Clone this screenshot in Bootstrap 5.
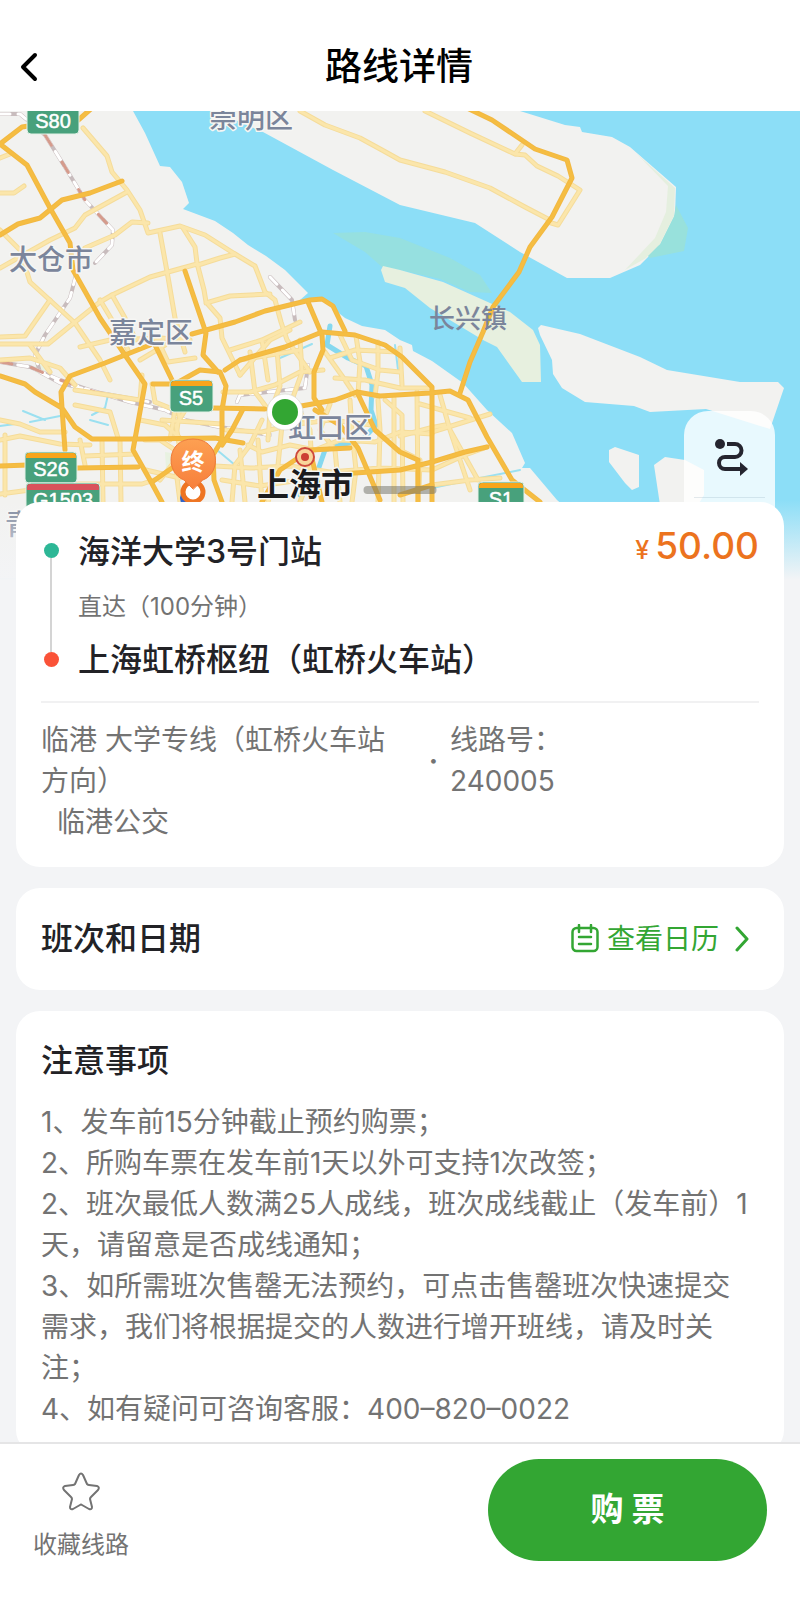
<!DOCTYPE html>
<html lang="zh-CN">
<head>
<meta charset="utf-8">
<meta name="viewport" content="width=device-width, initial-scale=1">
<title>路线详情</title>
<link href="https://cdn.jsdelivr.net/npm/bootstrap@5.3.0/dist/css/bootstrap.min.css" rel="stylesheet">
<style>
  :root { --brand: #33a633; --ink: #222226; --soft: #737373; --page: #f3f4f6; }
  body { background: var(--page); color: var(--ink); font-family: Inter, "Noto Sans CJK SC", sans-serif; padding-bottom: 162px; }
  .top-bar { height: 111px; padding: 22px 18px 0; }
  .page-title { font-size: 37px; line-height: 48px; font-weight: 500; color: #000; }
  .icon-btn { border: 0; background: none; padding: 0; line-height: 0; }
  .route-map { height: 469px; }
  .route-map > svg { width: 100%; height: 100%; display: block; }
  .map-tools { top: 300px; right: 25px; width: 91px; height: 120px; border-radius: 24px; background: rgba(255,255,255,.8); padding: 0 10px; }
  .map-tools .icon-btn { height: 87px; padding: 8px 0 0 4px; border-bottom: 1px solid rgba(120,150,170,.2); }
  .drag-handle { top: 375px; width: 73px; height: 8px; background: rgba(110,110,100,.5); }
  .sheet { margin-top: -78px; padding: 0 16px; gap: 21px; }
  .panel { background: #fff; border-radius: 24px; padding: 27px 25px 24px; }
  .panel-row { padding: 24px 25px; }
  .head-text { font-size: 32px; line-height: 46px; font-weight: 500; margin: 0; }
  .body-text { font-size: 28px; line-height: 41px; color: var(--soft); }
  .hint-text { font-size: 24px; line-height: 36px; color: var(--soft); }
  .track { width: 20px; padding: 14px 0 16px; }
  .stop { width: 15px; height: 15px; background: #2db796; }
  .stop-end { background: #fa5238; }
  .track-line { width: 2px; background: #d4d4d4; }
  .stations { margin-left: 17px; }
  .duration { margin: 0; padding: 14px 0 12px; }
  .price { color: #ec731e; font-size: 37px; line-height: 34px; font-weight: 500; }
  .price small { font-size: 25px; margin-right: 6px; }
  .rule { border-top: 2px solid #f1f1f2; margin: 18px 0 17px; }
  .line-name { flex: 0 1 366px; }
  .line-dot { width: 43px; padding-left: 10px; text-align: center; font-weight: 700; }
  .line-no { width: 120px; }
  .operator { padding-left: 16px; }
  .calendar-link { color: var(--brand); font-size: 28px; line-height: 41px; }
  .notice { margin: 18px 0 0; }
  .bottom-bar { background: #fff; border-top: 2px solid #e5e5e6; height: 162px; padding: 15px 33px 0; }
  .buy-btn, .buy-btn:hover { width: 279px; height: 102px; background: var(--brand); border: 0; color: #fff; font-size: 33px; font-weight: 700; }
  .place { font: 500 28px "Noto Sans CJK SC", sans-serif; fill: #7b859b; stroke: #f6f6f4; stroke-width: 3px; paint-order: stroke; stroke-linejoin: round; }
  .place-city { font-size: 32px; font-weight: 700; fill: #1b1b1d; }
  .shield-no { font: 20px "Liberation Sans", sans-serif; fill: #fff; stroke: #fff; stroke-width: .5px; text-anchor: middle; }
</style>
</head>
<body>
<header class="top-bar bg-white d-flex align-items-center position-relative">
  <button class="icon-btn" type="button" aria-label="返回">
    <svg width="22" height="32" viewBox="0 0 22 32" fill="none" stroke="#000" stroke-width="4" stroke-linecap="round" stroke-linejoin="round"><path d="M17 4 5 16l12 12"/></svg>
  </button>
  <h1 class="page-title flex-grow-1 text-center m-0 pe-4">路线详情</h1>
</header>

<section class="route-map position-relative overflow-hidden" aria-label="地图">
  <svg viewBox="0 111 800 469" preserveAspectRatio="xMidYMin slice" fill="none" stroke-linejoin="round" stroke-linecap="round">
    <defs>
      <linearGradient id="fade" x1="0" y1="0" x2="0" y2="1"><stop offset="0" stop-color="#f3f4f6" stop-opacity="0"/><stop offset="1" stop-color="#f3f4f6"/></linearGradient>
      <linearGradient id="pin" x1="0" y1="0" x2="0" y2="1"><stop offset="0" stop-color="#fda052"/><stop offset="1" stop-color="#f77f3c"/></linearGradient>
      <g id="local">
        <!-- north-west -->
        <path d="M83 128 107 156 112 172 127 190 140 210 148 233 180 226 205 235 235 254 255 266 265 292 275 300 281 322 287 340 310 372"/>
        <path d="M0 158 10 154M0 193 14 193 24 186M127 192 85 215 75 228 50 240 0 268M85 248 115 235 132 222 148 223M0 230 20 250 30 282 52 302 75 323 100 360 110 380"/>
        <path d="M0 337 25 336 50 300M0 344 48 344 75 322 100 302 112 295 150 277 197 264M160 233 168 277 175 318 185 352M183 228 195 247 197 263 204 290 206 302 220 318 222 338 240 375M198 265 220 258 235 254M206 303 230 296 270 294"/>
        <path d="M100 300 115 325 128 350M112 295 125 318 136 340M80 347 110 340 160 338 190 340M140 360 165 345"/>
        <path d="M240 375 270 340 290 330M230 350 262 340 300 322M262 340 268 380"/>
        <!-- west -->
        <path d="M0 360 30 358 60 368 75 385M50 372 30 345M0 420 20 424 40 432 65 432M75 390 140 400 142 375M75 405 110 412 118 438M80 440 85 465M102 440 103 502M120 440 121 502M0 440 20 436 60 444 90 445M5 495 5 435M0 494 30 490M78 484 142 484 160 478M85 456 135 454M140 420 165 425 180 438M145 440 160 440 178 452"/>
        <path d="M152 384 155 402 175 410 170 440M160 345 168 362 195 358M174 388 180 420M176 438 178 422 190 402M180 450 176 425M162 420 222 424M160 480 185 448M146 470 180 478M180 502 176 470"/>
        <!-- city centre -->
        <path d="M223 392 250 392 275 385 300 372 323 370M250 352 255 392 270 412 268 440M277 350 280 386 272 408M240 360 300 350M300 340 302 372 292 400M226 430 262 432 290 425 330 420 372 425M262 420 250 445 235 465 232 502M248 445 262 452 290 445 315 450 340 440 375 442 400 432 432 434"/>
        <path d="M215 466 250 468 290 466 330 472 380 468 432 470M222 480 260 486 300 480M240 450 245 502M258 440 262 502M282 425 278 465 268 502M300 412 310 430 312 470 300 502M330 404 320 430 335 450 340 502M350 400 352 432 356 470 352 502M378 400 380 430 378 502"/>
        <path d="M325 352 345 380 355 395M340 335 352 360 380 370 400 372M356 336 360 362 358 395M378 342 378 372 375 396M330 358 355 350 398 352M400 348 402 385M335 378 365 380 400 388 430 388M385 400 402 415 403 502M394 398 394 502M417 392 418 502M432 432 490 414M400 436 430 428 445 425M420 404 470 418M440 395 450 430 470 490M432 470 465 455 487 447M400 450 420 460 419 490M432 485 470 480 500 478M450 430 478 480"/>
        <!-- islands -->
        <path d="M300 111 325 125 360 138 382 150 400 160 445 172 490 188 525 207 548 219M425 111 470 133 515 154 525 155 537 166 558 176 580 190 558 225 548 222M515 154 522 145"/>
      </g>
      <g id="highway">
        <path d="M0 144 22 127 35 125M76 122 92 108M0 144 27 165 50 208 70 243 73 270 100 318 125 355 145 384 133 450 150 480 162 502"/>
        <path d="M0 235 18 224 40 218 62 200 90 193 122 181M185 271 206 333 203 355 218 372M192 334 235 322 265 311 310 300 322 299 333 306 345 331M308 302 322 335 323 350 314 372 314 398 322 410"/>
        <path d="M225 370 240 360 285 347 322 332 355 335 385 345 402 357 432 387 432 502M150 345 105 363 70 376 61 392 62 408 75 427 92 439 145 439 215 438 243 443M154 343 173 382M0 376 25 384 35 392 62 408 65 450"/>
        <path d="M153 384 175 384 200 370 220 372 226 386 222 410 222 440 213 455 214 480 222 502M213 408 265 409M290 408 318 403 335 400 357 392 380 396 430 393 450 391 468 400 487 437 512 480 540 502"/>
        <path d="M0 466 28 465M77 468 138 467M152 482 172 468M222 445 232 430 243 409M262 502 280 470 310 450 350 448M310 450 322 502M315 410 340 425 358 448 380 500M357 392 375 430 400 452 418 460M432 462 400 470 340 474M432 485 400 495M432 462 465 452 487 447M418 460 418 502"/>
        <path d="M467 108 492 120 535 149 567 160 572 178 552 217 530 247 519 272 493 307 483 332 470 362 460 393"/>
      </g>
    </defs>
    <rect y="111" width="800" height="469" fill="#8cdef7"/>
    <path fill="#f2f2f0" d="M0 111H133l12 22 15 33 10 1 12 15 7 21-6 6 32 12 18 12 15 12 18 11 19 14 23 23-8 7 20-2 15 12 10 8 17 8 23 4 15 10 12 5 1 6 19 10 31 22 24 27 25 23 13 30-3 5h8l27 32 43 38 20 40H0z"/>
    <path fill="#f2f2f0" d="M215 111 263 132 333 170 400 205 475 223 520 252 567 278H610L640 265 660 245 675 215 676 187 630 147 612 137 582 132 580 127 565 125 520 111z"/>
    <path fill="#98e1dc" d="M676 205 688 228 684 251 650 258 646 254 660 244 674 216z"/>
    <path fill="#e5efdf" d="M636 153 668 186 666 212 655 238 625 270 646 258 660 244 674 216 675 188z"/>
    <path fill="#98e1dc" opacity=".85" d="M333 233 365 232 400 238 450 258 480 275 492 293 470 292 440 279 400 270 382 267 365 252z"/>
    <path fill="#e7f0df" d="M381 270 383 266 400 270 443 282 490 303 510 312 533 330 540 345 541 382 522 382 497 347 483 340 430 308 405 288 385 282z"/>
    <path fill="#f2f2f0" d="M538 328 541 325 580 334 640 357 667 370 740 382H778L784 388 770 429 706 409 650 412 634 406 585 402 562 388 553 374 552 360 540 335zM609 450 615 447 639 455V487L632 490 625 483 609 462zM654 465 665 457 685 460 704 470V495L695 510 660 505z"/>
    <path fill="#e8f2e1" d="M35 362 50 360 52 370 36 373zM165 452l30 5-4 16-25-4z"/>
    <!-- rivers -->
    <path stroke="#85d8ef" stroke-width="5" d="M330 326 327 345 348 358 366 366 372 385 371 410 376 425 362 440 340 445 325 450 318 470 300 495"/>
    <path stroke="#9be0f0" stroke-width="2" d="M0 426 15 424M23 411 45 420M30 422 60 416M280 358 312 344M108 395 105 408 92 415M90 420 108 425M395 345 398 370M432 488 480 478 520 470M217 450 235 465"/>
    <!-- railways -->
    <g stroke-width="4">
      <path stroke="#c8bcbd" d="M0 114 20 114 45 135 65 167 85 200 113 230 112 245 95 263M76 275 70 298 45 335 35 355 40 372 60 383 90 390 130 402 165 410 185 420 220 427 270 435M0 362 30 367 60 380 95 392 150 402M270 277 292 300 295 320M237 402 240 395 305 388 308 365"/>
      <path stroke="#fff" stroke-width="3" stroke-dasharray="10 8" d="M0 114 20 114 45 135 65 167 85 200 113 230 112 245 95 263M76 275 70 298 45 335 35 355 40 372 60 383 90 390 130 402 165 410 185 420 220 427 270 435M0 362 30 367 60 380 95 392 150 402M270 277 292 300 295 320M237 402 240 395 305 388 308 365"/>
      <path stroke="#d59b8c" stroke-dasharray="12 20" stroke-width="3" d="M45 135 65 167 85 200 113 230M0 362 30 367 60 380 95 392 150 402"/>
    </g>
    <use href="#local" stroke="#f5dc9a" stroke-width="5"/>
    <use href="#local" stroke="#fbe6ab" stroke-width="3"/>
    <use href="#highway" stroke="#f2b842" stroke-width="5"/>
    <use href="#highway" stroke="#f5bd42" stroke-width="3"/>
    <!-- place names -->
    <text class="place" x="209" y="128">崇明区</text>
    <text class="place" x="9" y="270">太仓市</text>
    <text class="place" x="109" y="343">嘉定区</text>
    <text class="place" x="429" y="328" style="font-size:26px;stroke:none">长兴镇</text>
    <text class="place" x="288" y="438">虹口区</text>
    <text class="place" x="5" y="535">青浦区</text>
    <text class="place place-city" x="257" y="496">上海市</text>
    <!-- road shields -->
    <g stroke="#e4f1e6">
      <rect x="27" y="98" width="52" height="36" rx="4" fill="#48a17c"/>
      <rect x="170" y="380" width="43" height="32" rx="4" fill="#48a17c"/>
      <rect x="25" y="452" width="52" height="31" rx="4" fill="#48a17c"/>
      <rect x="26" y="483" width="74" height="33" rx="4" fill="#48a17c"/>
      <rect x="478" y="482" width="46" height="34" rx="4" fill="#48a17c"/>
    </g>
    <path fill="#f8a51b" d="M171 386v-2q0-3 3-3h35q3 0 3 3v2zM26 458v-2q0-3 3-3h44q3 0 3 3v2zM479 488v-2q0-3 3-3h38q3 0 3 3v2z"/>
    <path fill="#d9525b" d="M27 490v-3q0-3 3-3h66q3 0 3 3v3z"/>
    <text class="shield-no" x="53" y="128">S80</text>
    <text class="shield-no" x="191" y="405">S5</text>
    <text class="shield-no" x="51" y="476">S26</text>
    <text class="shield-no" x="63" y="507">G1503</text>
    <text class="shield-no" x="501" y="506">S1</text>
    <!-- city centre, start and end markers -->
    <circle cx="305" cy="457" r="9" fill="#f9d59a" stroke="#cf4a3c" stroke-width="2"/><circle cx="305" cy="457" r="4" fill="#cc3f33"/>
    <circle cx="285" cy="412" r="18" fill="#fff" stroke="#c9c9bd" stroke-opacity=".5"/><circle cx="285" cy="412" r="13" fill="#33a633"/>
    <circle cx="190" cy="498" r="10" fill="#2f62c9"/>
    <circle cx="193" cy="492" r="10" fill="#fff" stroke="#ee7422" stroke-width="5"/>
    <path fill="url(#pin)" stroke="#ee7a3a" d="M193 489 184 480C165 473 166 439 193 439S222 473 203 480z"/>
    <text x="193" y="470" text-anchor="middle" style="font:700 23px 'Noto Sans CJK SC',sans-serif" fill="#fff">终</text>
    <rect y="500" width="800" height="80" fill="url(#fade)"/>
  </svg>
  <div class="map-tools position-absolute">
    <button class="icon-btn d-flex w-100 align-items-center justify-content-center" type="button" aria-label="路线">
      <svg width="36" height="40" viewBox="0 0 36 40" fill="none" stroke="#25252f" stroke-width="4"><circle cx="6" cy="6" r="5" fill="#25252f" stroke="none"/><path d="M13 6h8a6 6 0 0 1 0 13H11a6 6 0 0 0 0 12h17"/><path d="M26 24v14l8-7z" fill="#25252f" stroke="none"/></svg>
    </button>
  </div>
  <div class="drag-handle position-absolute start-50 translate-middle-x rounded-pill"></div>
</section>

<main class="sheet d-flex flex-column position-relative">
  <section class="panel">
    <div class="d-flex">
      <div class="track d-flex flex-column align-items-center">
        <span class="stop rounded-circle"></span><span class="track-line flex-grow-1"></span><span class="stop stop-end rounded-circle"></span>
      </div>
      <div class="stations flex-grow-1">
        <h2 class="head-text">海洋大学3号门站</h2>
        <p class="hint-text duration">直达（100分钟）</p>
        <h2 class="head-text">上海虹桥枢纽（虹桥火车站）</h2>
      </div>
      <div class="price text-nowrap"><small>¥</small>50.00</div>
    </div>
    <div class="rule"></div>
    <div class="body-text">
      <div class="d-flex align-items-center">
        <span class="line-name">临港 大学专线（虹桥火车站方向）</span>
        <span class="line-dot">·</span>
        <span class="line-no">线路号：240005</span>
      </div>
      <div class="operator">临港公交</div>
    </div>
  </section>

  <section class="panel panel-row d-flex align-items-center justify-content-between">
    <h2 class="head-text py-1">班次和日期</h2>
    <a class="calendar-link d-flex align-items-center text-decoration-none" href="#calendar">
      <svg class="me-2" width="28" height="30" viewBox="0 0 28 30" fill="none" stroke="currentColor" stroke-width="2.5" stroke-linecap="round"><rect x="1.5" y="4" width="25" height="23" rx="4"/><path d="M8 1v7M20 1v7M8 13h12M8 20h12"/></svg>
      查看日历
      <svg class="ms-3 me-2" width="16" height="28" viewBox="0 0 16 28" fill="none" stroke="currentColor" stroke-width="3" stroke-linecap="round" stroke-linejoin="round"><path d="m2 3 10 11L2 25"/></svg>
    </a>
  </section>

  <section class="panel">
    <h2 class="head-text">注意事项</h2>
    <p class="notice body-text">1、发车前15分钟截止预约购票；<br>2、所购车票在发车前1天以外可支持1次改签；<br>2、班次最低人数满25人成线，班次成线截止（发车前）1天，请留意是否成线通知；<br>3、如所需班次售罄无法预约，可点击售罄班次快速提交<br>需求，我们将根据提交的人数进行增开班线，请及时关注；<br>4、如有疑问可咨询客服：400–820–0022</p>
  </section>
</main>

<footer class="bottom-bar fixed-bottom d-flex justify-content-between align-items-start">
  <button class="icon-btn hint-text d-flex flex-column align-items-center gap-3 pt-2" type="button">
    <svg class="mt-1" width="38" height="40" viewBox="0 0 38 38" fill="none" stroke="#737373" stroke-width="2" stroke-linejoin="round"><path d="M17 3q2-3 4 0l4 9q1 1 2 1l8 1q3 1 1 4l-7 7q-1 1-1 2l2 8q0 3-3 2l-7-4q-1-1-2 0l-7 4q-3 1-3-2l2-8q0-1-1-2l-7-7q-2-3 1-4l8-1q1 0 2-1z"/></svg>
    <span>收藏线路</span>
  </button>
  <button class="buy-btn btn rounded-pill" type="button">购 票</button>
</footer>
<script src="https://cdn.jsdelivr.net/npm/bootstrap@5.3.0/dist/js/bootstrap.bundle.min.js"></script>
</body>
</html>
